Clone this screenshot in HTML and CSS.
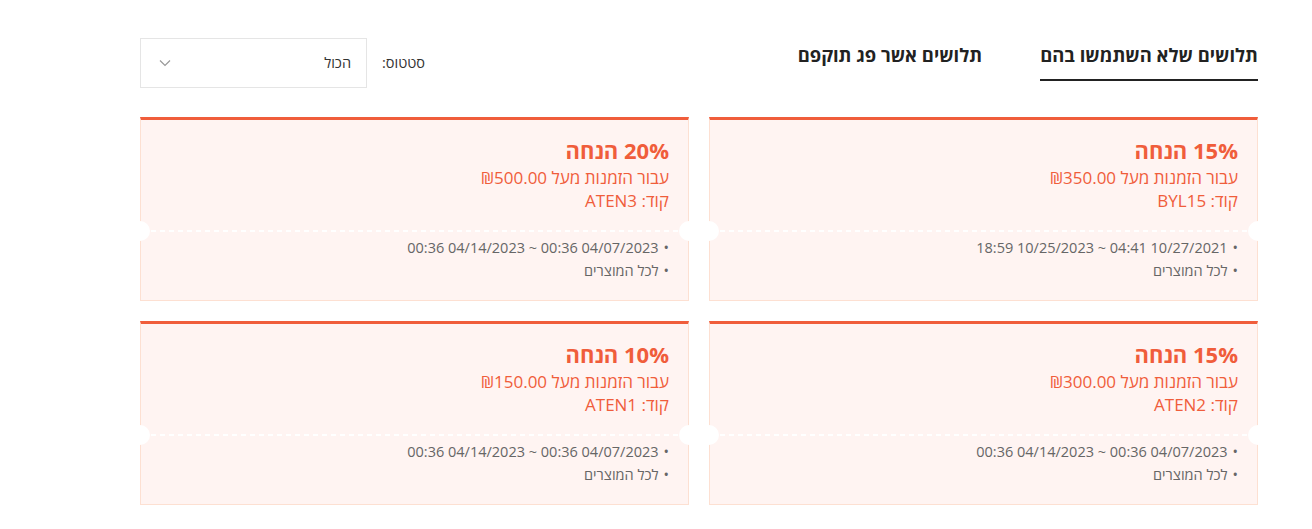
FILE: index.html
```html
<!DOCTYPE html>
<html lang="he" dir="rtl">
<head>
<meta charset="utf-8">
<title>תלושים</title>
<link rel="stylesheet" href="styles.css">
</head>
<body>
<div class="page">
  <div class="header">
    <div class="tabs">
      <div class="tab active">תלושים שלא השתמשו בהם</div>
      <div class="tab">תלושים אשר פג תוקפם</div>
    </div>
    <div class="filter">
      <span class="filter-label">סטטוס:</span>
      <div class="select">
        <span class="select-value">הכול</span>
        <svg class="chevron" width="12" height="8" viewBox="0 0 12 8"><path d="M1 1.5 L6 6.5 L11 1.5" fill="none" stroke="#999" stroke-width="1.2"/></svg>
      </div>
    </div>
  </div>
  <div class="grid">
    <div class="card">
      <div class="card-top">
        <div class="title">15% הנחה</div>
        <div class="sub">עבור הזמנות מעל ₪350.00</div>
        <div class="sub">קוד: BYL15</div>
      </div>
      <div class="sep"></div>
      <div class="card-bottom">
        <div class="item">10/27/2021 04:41 ~ 10/25/2023 18:59</div>
        <div class="item">לכל המוצרים</div>
      </div>
    </div>
    <div class="card">
      <div class="card-top">
        <div class="title">20% הנחה</div>
        <div class="sub">עבור הזמנות מעל ₪500.00</div>
        <div class="sub">קוד: ATEN3</div>
      </div>
      <div class="sep"></div>
      <div class="card-bottom">
        <div class="item">04/07/2023 00:36 ~ 04/14/2023 00:36</div>
        <div class="item">לכל המוצרים</div>
      </div>
    </div>
    <div class="card">
      <div class="card-top">
        <div class="title">15% הנחה</div>
        <div class="sub">עבור הזמנות מעל ₪300.00</div>
        <div class="sub">קוד: ATEN2</div>
      </div>
      <div class="sep"></div>
      <div class="card-bottom">
        <div class="item">04/07/2023 00:36 ~ 04/14/2023 00:36</div>
        <div class="item">לכל המוצרים</div>
      </div>
    </div>
    <div class="card">
      <div class="card-top">
        <div class="title">10% הנחה</div>
        <div class="sub">עבור הזמנות מעל ₪150.00</div>
        <div class="sub">קוד: ATEN1</div>
      </div>
      <div class="sep"></div>
      <div class="card-bottom">
        <div class="item">04/07/2023 00:36 ~ 04/14/2023 00:36</div>
        <div class="item">לכל המוצרים</div>
      </div>
    </div>
  </div>
</div>
</body>
</html>
```
FILE: styles.css
```css
html, body {
  margin: 0;
  padding: 0;
  background: #fff;
}
body {
  font-family: "Open Sans", "Noto Sans", sans-serif;
  color: #222;
}
.page {
  width: 1118px;
  margin-right: 54px;
  margin-left: 140px;
  padding-top: 38px;
}
.header {
  display: flex;
  justify-content: space-between;
  align-items: flex-start;
  height: 49px;
}
.tabs {
  display: flex;
  gap: 58px;
}
.tab {
  font-size: 18.4px;
  font-weight: 700;
  line-height: 24px;
  padding-top: 5px;
  padding-bottom: 12px;
  color: #222;
  border-bottom: 2px solid transparent;
}
.tab.active {
  border-bottom-color: #222;
}
.filter {
  display: flex;
  align-items: center;
  gap: 15px;
  height: 49px;
}
.filter-label {
  font-size: 14.5px;
  color: #333;
}
.select {
  box-sizing: border-box;
  width: 227px;
  height: 50px;
  border: 1px solid #e5e5e5;
  display: flex;
  align-items: center;
  justify-content: space-between;
  padding: 0 15px 0 18px;
  font-size: 14.5px;
  color: #333;
}
.chevron {
  display: block;
}
.grid {
  display: grid;
  grid-template-columns: 1fr 1fr;
  column-gap: 20px;
  row-gap: 20px;
  margin-top: 30px;
}
.card {
  position: relative;
  box-sizing: border-box;
  height: 184px;
  background: #fff4f2;
  border: 1px solid #fde0d2;
  border-top: 3px solid #f05d3b;
}
.card-top {
  padding: 14px 19px 0 19px;
}
.title {
  font-size: 22px;
  font-weight: 700;
  line-height: 32px;
  color: #f05d3b;
}
.sub {
  font-size: 17px;
  line-height: 23px;
  color: #f05d3b;
}
.sep {
  position: relative;
  height: 2px;
  margin: 18px 10px 4px 10px;
  background: repeating-linear-gradient(to right, #fff 0 5px, transparent 5px 9px);
}
.sep::before,
.sep::after {
  content: "";
  position: absolute;
  top: -9px;
  width: 20px;
  height: 20px;
  border-radius: 50%;
  background: #fff;
}
.sep::before {
  right: -21px;
}
.sep::after {
  left: -21px;
}
.card-bottom {
  padding: 0 19px;
}
.item {
  font-size: 14.5px;
  line-height: 23px;
  color: #666;
}
.item::before {
  content: "•";
  margin-left: 5px;
  color: #666;
}
```
